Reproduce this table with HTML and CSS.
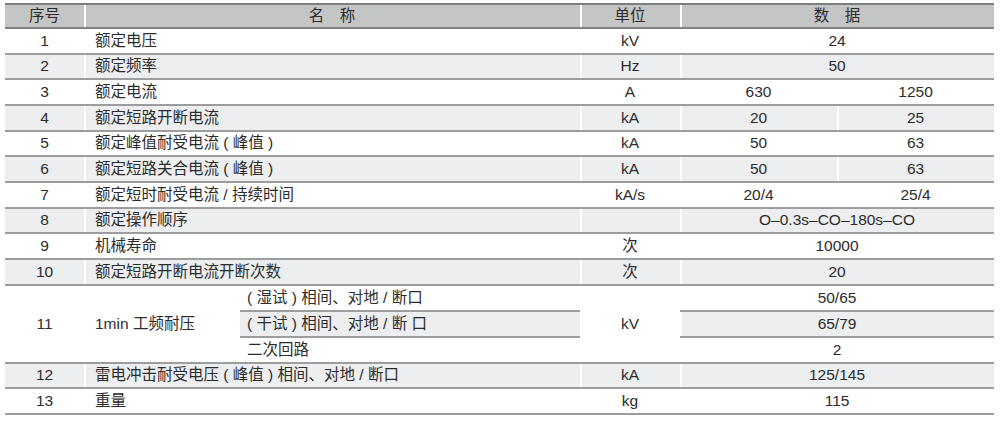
FILE: index.html
```html
<!DOCTYPE html>
<html lang="zh-CN">
<head>
<meta charset="utf-8">
<title>技术参数</title>
<link rel="stylesheet" href="styles.css">
</head>
<body>
<table class="spec">
  <colgroup>
    <col class="c-no"><col class="c-name1"><col class="c-name2"><col class="c-unit"><col class="c-d1"><col class="c-d2">
  </colgroup>
  <thead>
    <tr>
      <th>序号</th>
      <th colspan="2">名　称</th>
      <th>单位</th>
      <th colspan="2">数　据</th>
    </tr>
  </thead>
  <tbody>
    <tr><td class="no">1</td><td class="name" colspan="2">额定电压</td><td class="unit">kV</td><td class="val" colspan="2">24</td></tr>
    <tr class="alt"><td class="no">2</td><td class="name" colspan="2">额定频率</td><td class="unit">Hz</td><td class="val" colspan="2">50</td></tr>
    <tr><td class="no">3</td><td class="name" colspan="2">额定电流</td><td class="unit">A</td><td class="val">630</td><td class="val">1250</td></tr>
    <tr class="alt"><td class="no">4</td><td class="name" colspan="2">额定短路开断电流</td><td class="unit">kA</td><td class="val">20</td><td class="val">25</td></tr>
    <tr><td class="no">5</td><td class="name" colspan="2">额定峰值耐受电流 ( 峰值 )</td><td class="unit">kA</td><td class="val">50</td><td class="val">63</td></tr>
    <tr class="alt"><td class="no">6</td><td class="name" colspan="2">额定短路关合电流 ( 峰值 )</td><td class="unit">kA</td><td class="val">50</td><td class="val">63</td></tr>
    <tr><td class="no">7</td><td class="name" colspan="2">额定短时耐受电流 / 持续时间</td><td class="unit">kA/s</td><td class="val">20/4</td><td class="val">25/4</td></tr>
    <tr class="alt"><td class="no">8</td><td class="name" colspan="2">额定操作顺序</td><td class="unit"></td><td class="val" colspan="2">O–0.3s–CO–180s–CO</td></tr>
    <tr><td class="no">9</td><td class="name" colspan="2">机械寿命</td><td class="unit">次</td><td class="val" colspan="2">10000</td></tr>
    <tr class="alt"><td class="no">10</td><td class="name" colspan="2">额定短路开断电流开断次数</td><td class="unit">次</td><td class="val" colspan="2">20</td></tr>
    <tr class="sub">
      <td class="no" rowspan="3">11</td>
      <td class="name" rowspan="3">1min 工频耐压</td>
      <td class="subname">( 湿试 ) 相间、对地 / 断口</td>
      <td class="unit" rowspan="3">kV</td>
      <td class="val" colspan="2">50/65</td>
    </tr>
    <tr class="sub">
      <td class="subname shade">( 干试 ) 相间、对地 / 断 口</td>
      <td class="val shade" colspan="2">65/79</td>
    </tr>
    <tr class="sub">
      <td class="subname">二次回路</td>
      <td class="val" colspan="2">2</td>
    </tr>
    <tr class="alt"><td class="no">12</td><td class="name" colspan="2">雷电冲击耐受电压 ( 峰值 ) 相间、对地 / 断口</td><td class="unit">kA</td><td class="val" colspan="2">125/145</td></tr>
    <tr><td class="no">13</td><td class="name" colspan="2">重量</td><td class="unit">kg</td><td class="val" colspan="2">115</td></tr>
  </tbody>
</table>
</body>
</html>
```
FILE: styles.css
```css
html, body {
  margin: 0;
  padding: 0;
  background: #ffffff;
}

body {
  font-family: "Liberation Sans", "Noto Sans CJK SC", sans-serif;
  font-size: 15.5px;
  color: #2c2c2c;
}

.spec {
  margin: 3px 0 0 5px;
  width: 989px;
  table-layout: fixed;
  border-collapse: separate;
  border-spacing: 0;
}

.c-no { width: 79px; }
.c-name1 { width: 156px; }
.c-name2 { width: 340px; }
.c-unit { width: 100px; }
.c-d1 { width: 157px; }
.c-d2 { width: 157px; }

.spec th,
.spec td {
  padding: 0;
  line-height: 18px;
  white-space: nowrap;
  vertical-align: middle;
}

.spec thead tr {
  height: 26px;
}

.spec th {
  font-weight: normal;
  text-align: center;
  background: #c4c5c5;
  border-top: 2px solid #7e7e7e;
  border-bottom: 2px solid #828282;
}

.spec th + th {
  box-shadow: inset 2px 0 0 #ffffff;
}

.spec tbody tr {
  height: 25.67px;
}

.spec tbody tr.sub {
  height: 26px;
}

.spec td {
  border-bottom: 2px solid #9d9d9d;
}

.spec tr.alt td {
  background: #eceef0;
}

.spec tr.alt td + td {
  box-shadow: inset 2px 0 0 #ffffff;
}

.spec td.shade {
  background: #eceef0;
}

.spec td.val.shade {
  box-shadow: inset 2px 0 0 #ffffff;
}

.no {
  text-align: center;
}

.name {
  text-align: left;
  padding-left: 11px !important;
}

.subname {
  text-align: left;
  padding-left: 7px !important;
}

.unit,
.val {
  text-align: center;
}
```
